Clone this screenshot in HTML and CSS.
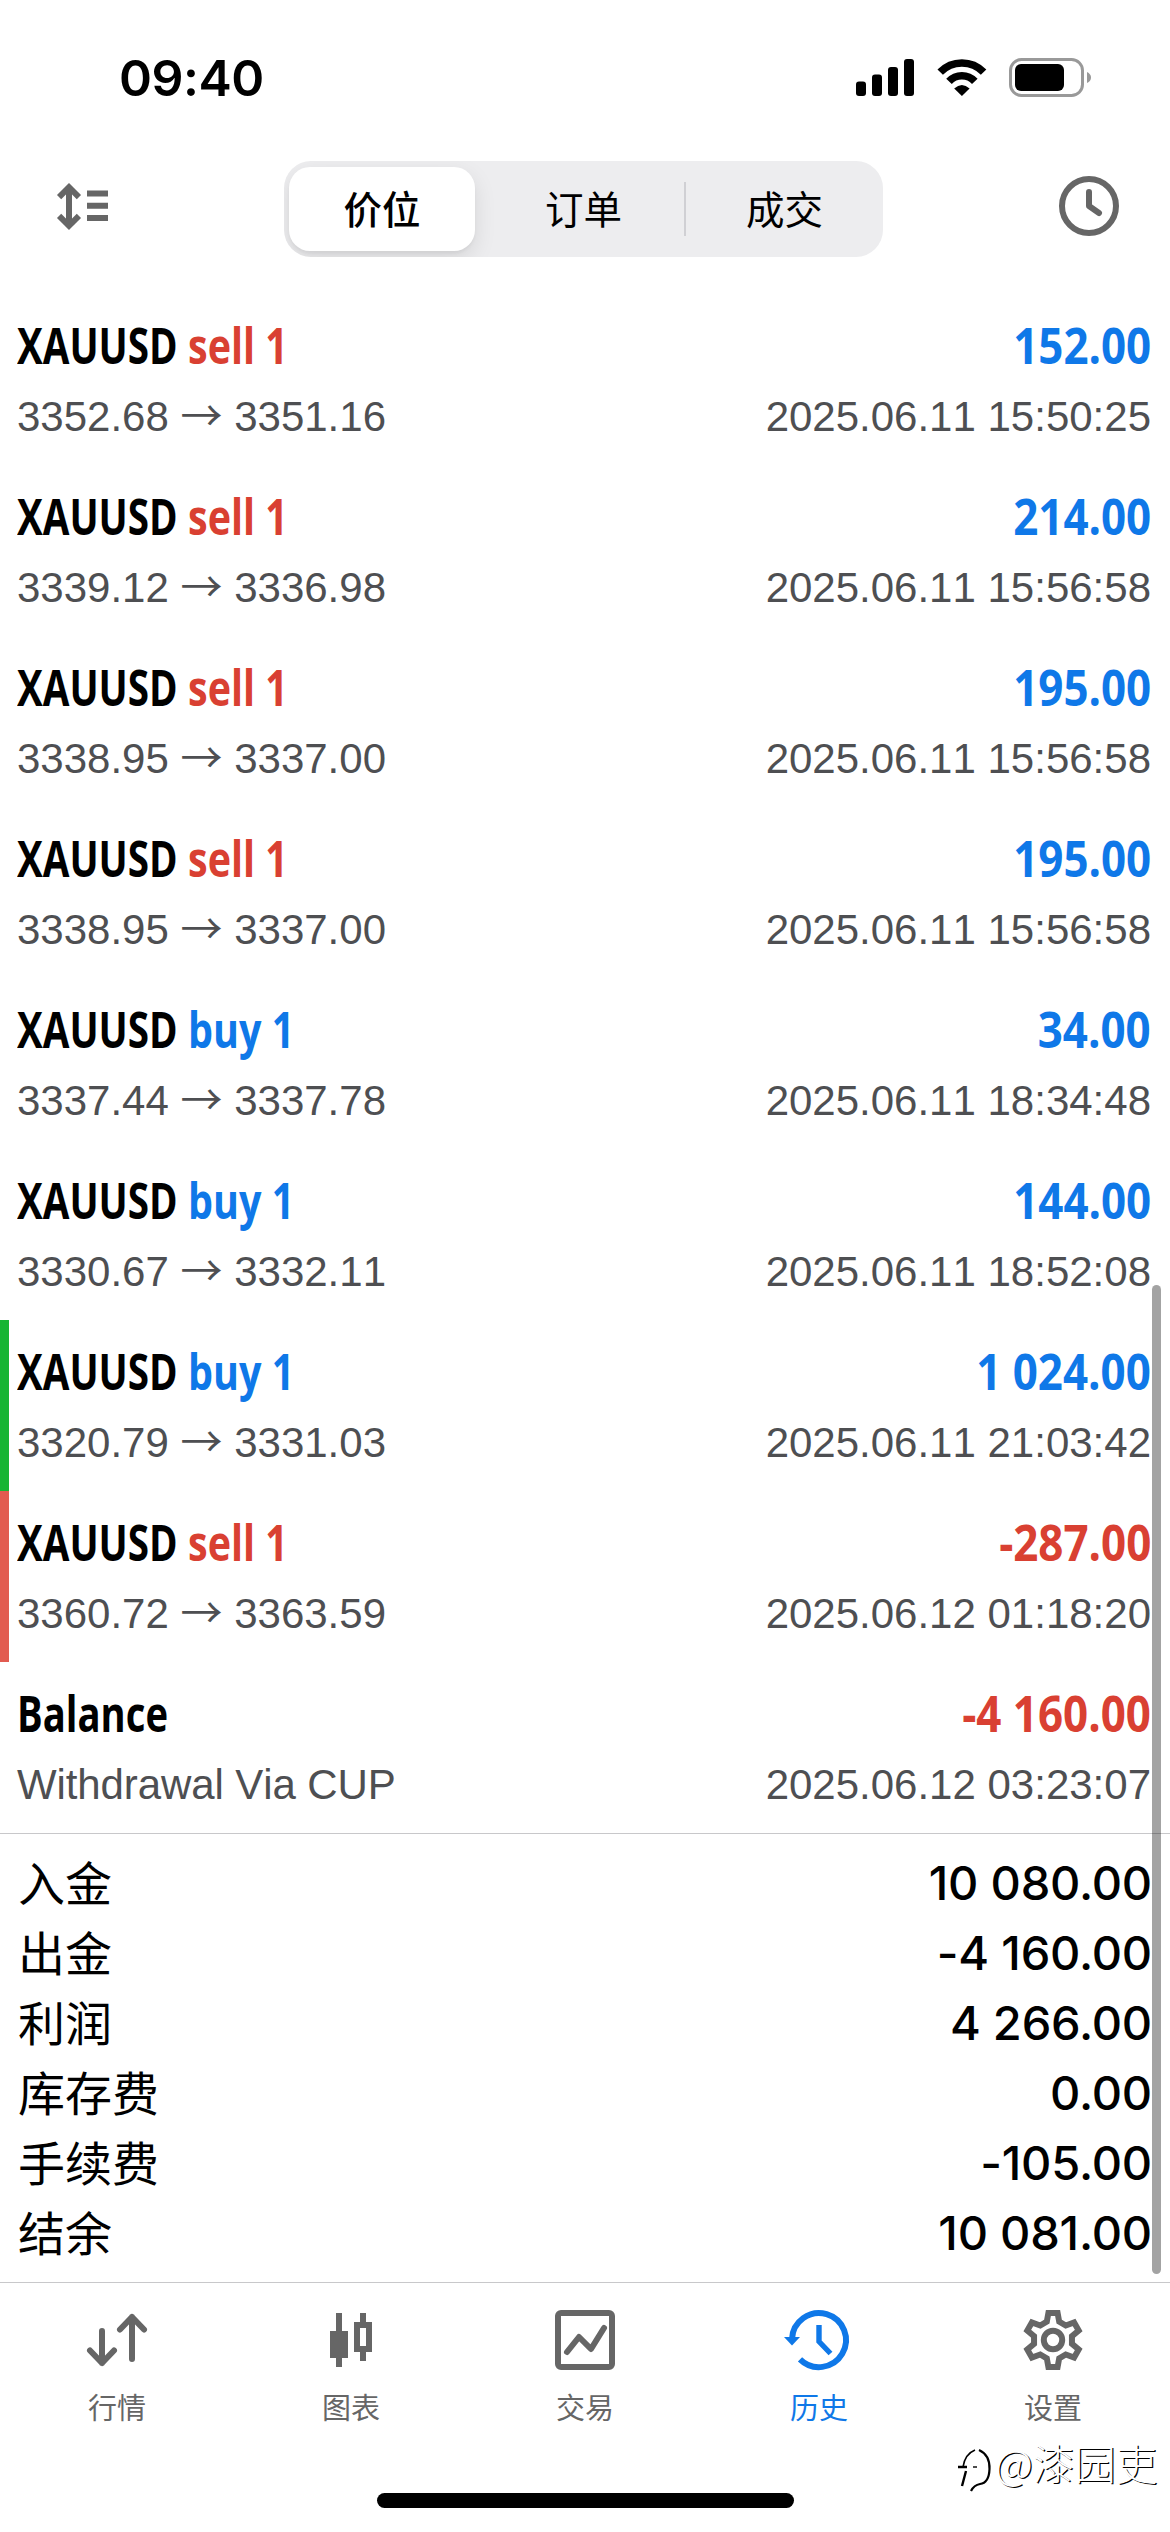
FILE: index.html
```html
<!DOCTYPE html>
<html lang="zh-CN">
<head>
<meta charset="utf-8">
<title>历史</title>
<link rel="stylesheet" href="styles.css">
</head>
<body>
<div class="screen">
  <header class="status">
    <span class="time">09:40</span>
    <div class="status-icons">
      <svg width="58" height="37" viewBox="0 0 58 37"><rect x="0" y="22.5" width="10" height="14.5" rx="3"/><rect x="16" y="15.5" width="10" height="21.5" rx="3"/><rect x="32" y="8" width="10" height="29" rx="3"/><rect x="48" y="0" width="10" height="37" rx="3"/></svg>
      <svg class="wifi" width="50" height="37" viewBox="0 0 50 37"><g fill="none" stroke="#000" stroke-width="7.6"><path d="M3.2 13.2A30.2 30.2 0 0 1 46.6 13.2"/><path d="M12 22.4A17.6 17.6 0 0 1 37.8 22.4"/></g><path d="M17.2 29.6Q24.9 22.6 32.6 29.6L24.9 37Z"/></svg>
      <svg class="battery" width="83" height="39" viewBox="0 0 83 39"><rect x="1.5" y="1.5" width="72" height="36" rx="11" fill="none" stroke="#999" stroke-width="3"/><rect x="6" y="6" width="49" height="27" rx="6"/><path d="M78 14Q82 16 82 19.5T78 25Z" fill="#999"/></svg>
    </div>
  </header>

  <nav class="toolbar">
    <svg width="51" height="47" viewBox="0 0 51 47" fill="none" stroke="#666" stroke-width="6"><path d="M12 5V42M2.1 14.1L12 4.2L21.9 14.1M2.1 32.9L12 42.8L21.9 32.9M30 10.5H51M30 22.8H51M30 35H51"/></svg>
    <div class="segmented">
      <span class="segment active">价位</span>
      <span class="segment">订单</span>
      <span class="segment divided">成交</span>
    </div>
    <svg width="60" height="60" viewBox="0 0 60 60" fill="none" stroke="#666" stroke-width="6"><circle cx="30" cy="30" r="27"/><path d="M30 16V30L40 37" stroke-linecap="round" stroke-linejoin="round"/></svg>
  </nav>

  <main class="deals">
    <section class="deal"><div class="line title"><span class="name"><b>XAUUSD</b><i class="sell">sell 1</i></span><span class="amount gain">152.00</span></div><div class="line detail"><span>3352.68 <em>→</em> 3351.16</span><span>2025.06.11 15:50:25</span></div></section>
    <section class="deal"><div class="line title"><span class="name"><b>XAUUSD</b><i class="sell">sell 1</i></span><span class="amount gain">214.00</span></div><div class="line detail"><span>3339.12 <em>→</em> 3336.98</span><span>2025.06.11 15:56:58</span></div></section>
    <section class="deal"><div class="line title"><span class="name"><b>XAUUSD</b><i class="sell">sell 1</i></span><span class="amount gain">195.00</span></div><div class="line detail"><span>3338.95 <em>→</em> 3337.00</span><span>2025.06.11 15:56:58</span></div></section>
    <section class="deal"><div class="line title"><span class="name"><b>XAUUSD</b><i class="sell">sell 1</i></span><span class="amount gain">195.00</span></div><div class="line detail"><span>3338.95 <em>→</em> 3337.00</span><span>2025.06.11 15:56:58</span></div></section>
    <section class="deal"><div class="line title"><span class="name"><b>XAUUSD</b><i class="buy">buy 1</i></span><span class="amount gain">34.00</span></div><div class="line detail"><span>3337.44 <em>→</em> 3337.78</span><span>2025.06.11 18:34:48</span></div></section>
    <section class="deal"><div class="line title"><span class="name"><b>XAUUSD</b><i class="buy">buy 1</i></span><span class="amount gain">144.00</span></div><div class="line detail"><span>3330.67 <em>→</em> 3332.11</span><span>2025.06.11 18:52:08</span></div></section>
    <section class="deal take-profit"><div class="line title"><span class="name"><b>XAUUSD</b><i class="buy">buy 1</i></span><span class="amount gain">1 024.00</span></div><div class="line detail"><span>3320.79 <em>→</em> 3331.03</span><span>2025.06.11 21:03:42</span></div></section>
    <section class="deal stop-loss"><div class="line title"><span class="name"><b>XAUUSD</b><i class="sell">sell 1</i></span><span class="amount loss">-287.00</span></div><div class="line detail"><span>3360.72 <em>→</em> 3363.59</span><span>2025.06.12 01:18:20</span></div></section>
    <section class="deal"><div class="line title"><span class="name"><b class="balance">Balance</b></span><span class="amount loss">-4 160.00</span></div><div class="line detail"><span class="comment">Withdrawal Via CUP</span><span>2025.06.12 03:23:07</span></div></section>
  </main>

  <dl class="summary">
    <div><dt>入金</dt><dd>10 080.00</dd></div>
    <div><dt>出金</dt><dd>-4 160.00</dd></div>
    <div><dt>利润</dt><dd>4 266.00</dd></div>
    <div><dt>库存费</dt><dd>0.00</dd></div>
    <div><dt>手续费</dt><dd>-105.00</dd></div>
    <div><dt>结余</dt><dd>10 081.00</dd></div>
  </dl>

  <footer class="tabs">
    <a class="tab"><svg viewBox="0 0 60 60"><path d="M15 21V53M3 40.5L15 53L27 40.5M45 49V7M33 19.5L45 7L57 19.5" stroke-linecap="round" stroke-linejoin="round"/></svg>行情</a>
    <a class="tab"><svg viewBox="0 0 60 60"><path d="M18 3V57M42 3V12M42 42V51"/><path d="M9 21H27V48H9Z" fill="currentColor" stroke="none"/><path d="M36 15H48V39H36Z"/></svg>图表</a>
    <a class="tab"><svg viewBox="0 0 60 60"><rect x="3" y="3" width="54" height="54" rx="3"/><path d="M12 42L24 27L36 39L49 18" stroke-linecap="round" stroke-linejoin="round"/></svg>交易</a>
    <a class="tab current"><svg viewBox="0 0 60 60"><path d="M3 29A27 27 0 1 1 11 49.3"/><path d="M-5 27H11L3 35.5Z" fill="currentColor" stroke="none"/><path d="M30 15V31.5L41.5 43.5" stroke-width="5.4"/></svg>历史</a>
    <a class="tab"><svg viewBox="-30 -30 60 60"><path d="M-6.2-18.3L-4.6-27H4.6L6.2-18.3L12.75-14.5L21.1-17.5L25.7-9.5L18.95-3.8V3.8L25.7 9.5L21.1 17.5L12.75 14.5L6.2 18.3L4.6 27H-4.6L-6.2 18.3L-12.75 14.5L-21.1 17.5L-25.7 9.5L-18.95 3.8V-3.8L-25.7-9.5L-21.1-17.5L-12.75-14.5Z"/><circle r="9.2"/></svg>设置</a>
  </footer>

  <div class="home-indicator"></div>
  <div class="scrollbar"></div>
  <div class="signature">
    <svg width="36" height="46" viewBox="0 0 36 46" fill="none" stroke="#000"><path d="M1 21H6Q8 8 18 4" stroke-width="1.6"/><path d="M1 21H10M9 25L5 40" stroke-width="2.4"/><path d="M16 21H20" stroke-width="1.4"/><path d="M22 4Q33 9 32.5 23Q32 37 23 38Q17 39 14 45" stroke-width="2.2"/></svg>
    <span>@漆园吏</span>
  </div>
</div>
</body>
</html>
```
FILE: styles.css
```css
* { box-sizing: border-box; }

body {
  margin: 0;
  background: #fff;
  color: #000;
  font-family: "Liberation Sans", "Noto Sans CJK SC", sans-serif;
}

.screen {
  position: relative;
  display: flex;
  flex-direction: column;
  width: 1170px;
  height: 2532px;
  overflow: hidden;
  background: #fff;
}

svg { display: block; flex: none; overflow: visible; }

.status {
  display: flex;
  justify-content: space-between;
  align-items: flex-start;
  height: 161px;
  padding: 58px 78px 0 119px;
}

.time {
  font: 600 50px/40px Inter, sans-serif;
  letter-spacing: -0.5px;
}

.status-icons { display: flex; align-items: flex-start; padding-top: 1px; }
.wifi { margin-left: 23px; }
.battery { margin: -1px 0 0 22px; }

.toolbar {
  display: flex;
  justify-content: space-between;
  align-items: center;
  height: 96px;
  padding: 0 51px 0 57px;
  margin-bottom: 37px;
}

.toolbar > svg { margin-top: -6px; }

.segmented {
  display: grid;
  grid-template-columns: 186px 1fr 199px;
  width: 599px;
  height: 96px;
  padding: 6px 0 6px 5px;
  border-radius: 27px;
  overflow: hidden;
  background: #ededef;
  font: 400 38.5px/81px "Noto Sans CJK SC", sans-serif;
  text-align: center;
}

.segment:nth-child(2) { padding-left: 8px; }
.segment:nth-child(3) { padding-left: 2px; }

.active {
  border-radius: 21px;
  background: #fff;
  box-shadow: 0 8px 22px rgba(0, 0, 0, .1), 0 3px 3px rgba(0, 0, 0, .04);
  font-weight: 500;
}

.divided {
  background: linear-gradient(#d0d0d4, #d0d0d4) 0 50% / 2px 54px no-repeat;
}

.deals { border-bottom: 1px solid #c8c8ca; }

.deal {
  height: 171px;
  padding: 24px 19px 0 17px;
}

.take-profit, .stop-loss { padding-left: 8px; border-left: 9px solid #16b534; }
.stop-loss { border-left-color: #e25b50; }

.line { display: flex; justify-content: space-between; white-space: nowrap; }

.title { height: 75px; font: 700 50px/55px "Open Sans", sans-serif; }
.name { display: flex; }
.name b { width: 171px; font-weight: inherit; transform: scaleX(.772); transform-origin: 0 0; }
.name i { font-style: normal; transform: scaleX(.79); transform-origin: 0 0; }
.name .balance { width: auto; transform: scaleX(.765); }
.amount { transform: scaleX(.878); transform-origin: 100% 0; }

.sell, .loss { color: #d94032; }
.buy, .gain { color: #0f78e8; }

.detail {
  font-size: 42px;
  line-height: 48px;
  color: #4e4f52;
  font-kerning: none;
}
.detail em {
  display: inline-block;
  width: 42px;
  font: 400 42px/40px "Noto Sans CJK SC", sans-serif;
}
.comment { letter-spacing: -0.1px; }

.summary {
  height: 448px;
  margin: 0;
  padding: 14px 18px 0 18px;
  font: 400 47px/65px "Noto Sans CJK SC", sans-serif;
}

.summary div { display: flex; justify-content: space-between; height: 70px; }
.summary dd {
  margin: 0;
  font: 500 47px/70px Inter, sans-serif;
  letter-spacing: -0.2px;
}

.tabs {
  display: grid;
  grid-template-columns: repeat(5, 1fr);
  height: 211px;
  padding-top: 27px;
  border-top: 1px solid #c8c8ca;
}

.tab {
  display: flex;
  flex-direction: column;
  align-items: center;
  color: #666;
  font: 400 29px/40px "Noto Sans CJK SC", sans-serif;
}

.tab svg {
  width: 60px;
  height: 60px;
  margin-bottom: 16px;
  fill: none;
  stroke: currentColor;
  stroke-width: 6;
}

.current { color: #0f78e8; }

.home-indicator {
  width: 417px;
  height: 15px;
  margin: 0 auto;
  border-radius: 8px;
  background: #000;
}

.scrollbar {
  position: absolute;
  top: 1285px;
  left: 1152px;
  width: 9px;
  height: 989px;
  border-radius: 5px;
  background: rgba(0, 0, 0, .36);
}

.signature {
  position: absolute;
  top: 2446px;
  left: 957px;
  display: flex;
  align-items: flex-start;
  gap: 2px;
  color: #fff;
  font: 300 41.5px/32px "Noto Sans CJK SC", sans-serif;
  text-shadow: 1.3px 1.3px 0 #000;
}
```
